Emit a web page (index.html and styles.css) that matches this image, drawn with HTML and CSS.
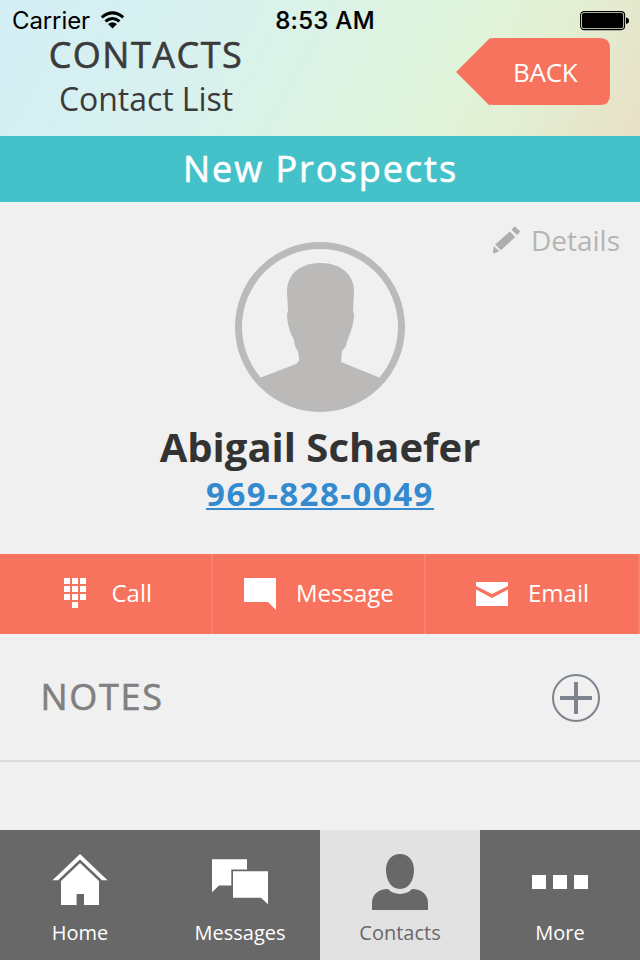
FILE: index.html
```html
<!DOCTYPE html>
<html lang="en">
<head>
<meta charset="utf-8">
<title>Contacts</title>
<link rel="stylesheet" href="styles.css">
</head>
<body>
<div class="app">
  <header class="header">
    <div class="status">
      <div class="carrier"><span>Carrier</span>
        <svg width="25" height="19" viewBox="0 0 26 20" fill="none" stroke="#000" stroke-width="3.1"><path d="M1.7 6.8Q13-2.8 24.3 6.8M5.6 11Q13 4.600 20.400 11"/><path d="M8.300 13.800Q13 10 17.700 13.800L13 18.500Z" fill="#000" stroke="none"/></svg>
      </div>
      <time class="time">8:53 AM</time>
      <svg class="battery" width="50" height="20" viewBox="0 0 50 20"><rect x=".6" y=".6" width="44" height="18" rx="3.500" fill="none" stroke="#000" stroke-width="1.1"/><rect x="2" y="2" width="41.200" height="15.200" rx="2"/><path d="M46 6.500Q49 7 49 9.700Q49 12.400 46 13Z"/></svg>
    </div>
    <div class="heading">
      <div class="titles">
        <h1>CONTACTS</h1>
        <p>Contact List</p>
      </div>
      <a class="back"><svg width="154" height="68" viewBox="0 0 154 68"><path d="M0 34L34 0V.4Q35 0 38 0H144Q154 0 154 10V57Q154 67 144 67H38Q35 67 34 66.600V68Z" fill="#f7735d"/></svg><span>BACK</span></a>
    </div>
  </header>
  <div class="banner"><span>New Prospects</span></div>
  <main class="profile">
    <a class="details">
      <svg width="28" height="28" viewBox="0 0 28 28" fill="#aeaeae"><path d="M18.500 3.700L21 1Q21.800.2 22.600 1L26.500 4.800Q27.200 5.500 26.500 6.300L24.100 8.900ZM16.800 5.500L22.300 10.900L8 24.200L2.200 18.500ZM.8 20L6.400 25.600L0 27.600Z"/></svg>
      <span>Details</span>
    </a>
    <svg class="avatar" width="170" height="170" viewBox="0 0 170 170"><circle cx="85" cy="85" r="81.500" fill="#f0f0f0" stroke="#bbbab9" stroke-width="7"/><path d="M22 137L61 122Q65 120 64 115Q64 110 61 106C59 103 60 98 57 94C54 88 52 80 52 72L53 69L52 50C52 31 66 21 86 21C106 21 120 33 119 51L118 69L119 72C119 81 116 89 114 94Q112 99 111 104L107 109L106 120L148 137Q121 166 85 166Q50 166 22 137Z" fill="#bbbab9"/></svg>
    <h2>Abigail Schaefer</h2>
    <a class="phone">969-828-0049</a>
  </main>
  <div class="actions">
    <a class="action call"><svg width="22" height="30" viewBox="0 0 22 30" fill="#fff"><path d="M0 0h6v6H0zM8 0h6v6H8zM16 0h6v6h-6zM0 8h6v6H0zM8 8h6v6H8zM16 8h6v6h-6zM0 16h6v6H0zM8 16h6v6H8zM16 16h6v6h-6zM8 24h6v6H8z"/></svg><span>Call</span></a>
    <a class="action message"><svg width="32" height="32" viewBox="0 0 32 32"><path d="M0 0H32V32L24 24H0Z" fill="#fff"/></svg><span>Message</span></a>
    <a class="action email"><svg width="32" height="24" viewBox="0 0 32 24"><path d="M0 0H32V4L16 12L0 4ZM0 7.500L16 16L32 7.500V24H0Z" fill="#fff"/></svg><span>Email</span></a>
  </div>
  <section class="notes">
    <h3>NOTES</h3>
    <svg width="48" height="48" viewBox="0 0 48 48" fill="none" stroke="#7d8490"><circle cx="24" cy="24" r="23" stroke-width="2"/><path d="M24 8V40M8 24H40" stroke-width="4"/></svg>
  </section>
  <nav class="tabs">
    <a class="tab home"><svg width="56" height="56" viewBox="0 0 56 56" fill="#fff"><path d="M28 0L55.500 26.200H50L28 5.400L6 26.200H.5ZM28 9L47 27V51H32V40H24.600V51H9V27Z"/></svg><span>Home</span></a>
    <a class="tab messages"><svg width="56" height="56" viewBox="0 0 56 56" fill="#fff"><path d="M0 5.300H35V15.500H19.300V31.500H7L0 38.200ZM21 17.300H56V50.200L49 43.700H21Z"/></svg><span>Messages</span></a>
    <a class="tab contacts"><svg width="56" height="56" viewBox="0 0 56 56" fill="#686868"><path d="M28 0C37 0 42 7 42 16C42 26 37 35 28 35S14 26 14 16C14 7 19 0 28 0ZM16 35C22 41.500 34 41.500 40 35C50 35 56 41 56 49V56H0V49C0 41 6 35 16 35Z"/></svg><span>Contacts</span></a>
    <a class="tab more"><svg width="56" height="56" viewBox="0 0 56 56" fill="#fff"><path d="M0 21h14v14H0zM21 21h14v14H21zM42 21h14v14H42z"/></svg><span>More</span></a>
  </nav>
</div>
</body>
</html>
```
FILE: styles.css
```css
* { box-sizing: border-box; }
body { margin: 0; font-family: "Open Sans", sans-serif; }
h1, h2, h3, p { margin: 0; }
svg { display: block; flex: none; }
span, h1, h2, h3, p, time { white-space: nowrap; }
.app { width: 640px; height: 960px; display: flex; flex-direction: column; background: #f0f0f0; overflow: hidden; }

.header { height: 136px; background: linear-gradient(118deg, #d3eef5 0%, #d8f1f0 28%, #dbf3e6 48%, #dff4da 68%, #e3efd2 82%, #e8dfc6 100%); }
.status { height: 36px; padding: 5px 10px 0 12px; display: grid; grid-template-columns: 1fr auto 1fr; align-items: center; font-family: Inter, sans-serif; font-size: 24px; line-height: 31px; color: #000; }
.carrier { display: flex; align-items: center; gap: 10px; letter-spacing: -.1px; }
.time { font-weight: 500; letter-spacing: .3px; -webkit-text-stroke: .2px #000; transform: translateX(4px); }
.battery { justify-self: end; }
.heading { display: flex; justify-content: space-between; align-items: flex-start; padding: 0 30px 0 48px; }
.titles { width: 196px; text-align: center; color: #3b3b3b; }
.titles h1 { padding-top: 1px; font-size: 36px; font-weight: 400; line-height: 36px; letter-spacing: 1.5px; -webkit-text-stroke: .6px currentColor; }
.titles p { margin-top: 6px; font-size: 32px; line-height: 40px; letter-spacing: -.05px; }
.back { display: grid; width: 154px; margin-top: 2px; color: #fff; font-size: 26px; }
.back > * { grid-area: 1 / 1; }
.back span { align-self: center; padding-left: 57px; line-height: 34px; letter-spacing: -.3px; }

.banner { height: 66px; padding-left: 1px; background: #45c2c9; color: #fff; font-size: 36px; font-weight: 400; line-height: 66px; letter-spacing: 2px; text-align: center; -webkit-text-stroke: .6px currentColor; }

.profile { height: 352px; display: flex; flex-direction: column; align-items: center; }
.details { align-self: flex-end; display: flex; align-items: center; gap: 10px; height: 40px; margin-right: 20px; padding-top: 35px; color: #b4b4b4; font-size: 28px; line-height: 34px; }
.profile h2 { margin-top: 10px; font-size: 40px; line-height: 50px; font-weight: 700; color: #333; }
.phone { font-size: 33px; line-height: 44px; font-weight: 700; letter-spacing: 1.5px; color: #338acf; text-decoration: underline; text-decoration-thickness: 2px; text-underline-offset: 2px; }

.actions { height: 80px; display: grid; grid-template-columns: 213px 213px 214px; background: #f7735d; color: #fff; font-size: 24px; line-height: 78px; }
.action { display: flex; border-right: 2px solid #fa8270; }
.action svg { margin-top: 24px; }
.call { padding-left: 64px; gap: 25.5px; }
.message { padding-left: 31px; gap: 20px; }
.email { padding-left: 50px; gap: 20px; }
.email svg { margin-top: 28px; }

.notes { height: 128px; padding: 2px 40px 0; display: flex; justify-content: space-between; align-items: center; border-bottom: 2px solid #dcdcdc; }
.notes h3 { padding: 0 0 2px .5px; font-size: 36px; line-height: 48px; font-weight: 400; letter-spacing: 1.7px; color: #808080; -webkit-text-stroke: .6px currentColor; }

.tabs { margin-top: auto; height: 130px; display: grid; grid-template-columns: repeat(4, 1fr); background: #686868; color: #fff; }
.tab { display: flex; flex-direction: column; align-items: center; padding-top: 24px; font-size: 20px; line-height: 28px; }
.tab span { margin-top: 9px; }
.contacts { background: #e2e2e2; color: #686868; }
```
